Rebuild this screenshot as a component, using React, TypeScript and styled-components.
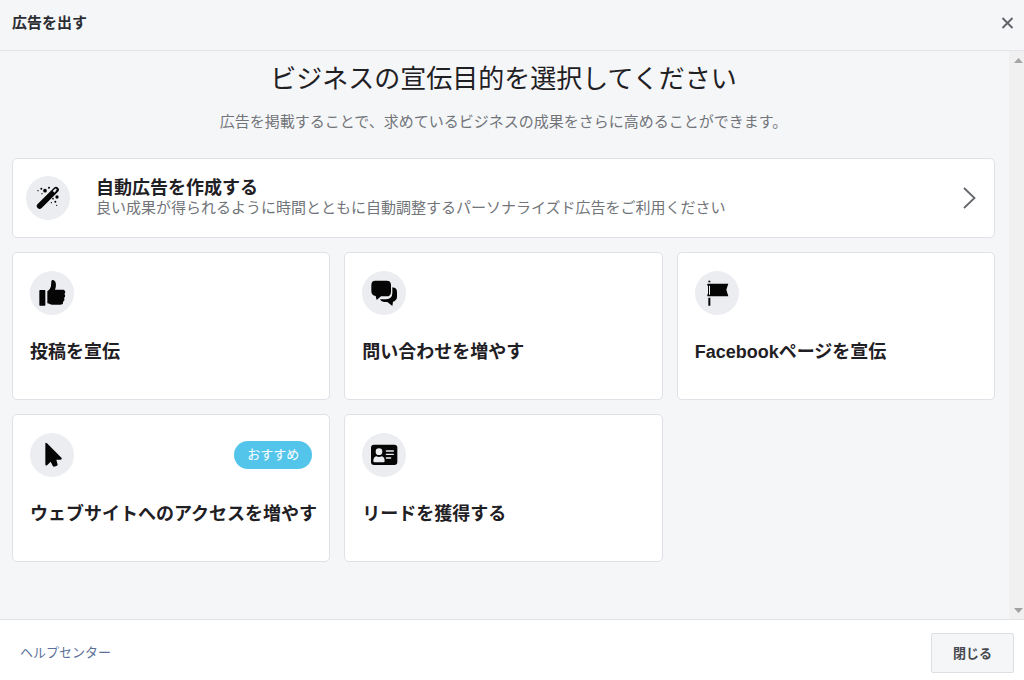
import React from "react";
import styled, { createGlobalStyle } from "styled-components";

const GlobalStyle = createGlobalStyle`
  *, *::before, *::after { box-sizing: border-box; }
  body {
    margin: 0;
    background: #f5f6f8;
    color: #1f2024;
    font-family: "Liberation Sans", "Noto Sans CJK JP", sans-serif;
  }
  button { font-family: inherit; color: inherit; cursor: pointer; }
`;

const Dialog = styled.div`
  display: flex;
  flex-direction: column;
  min-height: 100vh;
`;

const Header = styled.header`
  display: flex;
  align-items: center;
  justify-content: space-between;
  height: 51px;
  padding: 0 10px 4px 12px;
  border-bottom: 1px solid #e3e5e9;
`;

const DialogTitle = styled.h1`
  margin: 0;
  font-size: 15px;
  line-height: 20px;
  font-weight: 700;
  color: #2b2d33;
`;

const CloseIconButton = styled.button`
  display: flex;
  padding: 0;
  border: 0;
  background: none;
  color: #606369;
`;

const Body = styled.div`
  display: flex;
  flex: 1;
`;

const Content = styled.main`
  flex: 1;
  min-width: 0;
  padding: 9px 14px 20px 12px;
`;

const Heading = styled.h2`
  margin: 0;
  font-size: 26px;
  line-height: 38px;
  font-weight: 400;
  text-align: center;
`;

const Lead = styled.p`
  margin: 14px 0 26px;
  font-size: 15px;
  line-height: 20px;
  text-align: center;
  color: #717479;
`;

const Grid = styled.div`
  display: grid;
  grid-template-columns: repeat(3, minmax(0, 1fr));
  gap: 14px;
`;

const Card = styled.button`
  border: 1px solid #dfe1e6;
  border-radius: 5px;
  background: #fff;
  text-align: left;
`;

const WideCard = styled(Card)`
  grid-column: 1 / -1;
  display: flex;
  align-items: center;
  gap: 26px;
  min-height: 80px;
  padding: 0 18px 0 13px;
`;

const WideText = styled.span`
  display: flex;
  flex: 1;
  flex-direction: column;
`;

const GoalCard = styled(Card)`
  display: flex;
  flex-direction: column;
  gap: 27px;
  min-height: 148px;
  padding: 18px 17px;
`;

const CardTop = styled.span`
  display: flex;
  align-items: center;
  justify-content: space-between;
`;

const CardTitle = styled.span`
  font-size: 18px;
  line-height: 20px;
  font-weight: 700;
  white-space: nowrap;
`;

const CardNote = styled.span`
  font-size: 15px;
  line-height: 20px;
  color: #717479;
`;

const IconDisc = styled.svg`
  flex: none;
  width: 44px;
  height: 44px;
  border-radius: 50%;
  background: #ebedf1;
  fill: #050505;
`;

const Badge = styled.span`
  padding: 0 13px;
  border-radius: 14px;
  background: #54c5ea;
  color: #fff;
  font-size: 13px;
  line-height: 28px;
`;

const ScrollTrack = styled.div`
  display: flex;
  flex-direction: column;
  justify-content: space-between;
  align-items: center;
  width: 15px;
  padding: 7px 0 6px 3px;
  background: #f0f0f1;
`;

const Footer = styled.footer`
  display: flex;
  align-items: center;
  justify-content: space-between;
  height: 61px;
  padding: 5px 10px 0 20px;
  border-top: 1px solid #e0e2e5;
  background: #fff;
`;

const HelpLink = styled.a`
  font-size: 13px;
  line-height: 20px;
  color: #5c7199;
  text-decoration: none;
`;

const CloseButton = styled.button`
  width: 83px;
  height: 40px;
  padding: 0;
  border: 1px solid #dcdfe4;
  border-radius: 2px;
  background: #f5f6f8;
  color: #46494f;
  font-size: 13px;
  font-weight: 700;
`;

const WandIcon = () => (
  <IconDisc viewBox="33 35 132 132" aria-hidden="true">
    <path d="M74 125 L123 76" stroke="#050505" strokeWidth="17" strokeLinecap="round" />
    <path d="M113 80 L120 73 Q125 71 125 76 L119 85 Z" fill="#ebedf1" />
    <circle cx="90" cy="79" r="5.5" />
    <circle cx="102" cy="70" r="3" />
    <circle cx="79" cy="73" r="3" />
    <circle cx="69" cy="79" r="2" />
    <circle cx="81" cy="88" r="2" />
    <circle cx="126" cy="98" r="5" />
    <circle cx="114" cy="103" r="2.5" />
    <circle cx="121" cy="112" r="3" />
    <circle cx="109" cy="115" r="2" />
    <circle cx="125" cy="123" r="2" />
  </IconDisc>
);

const LikeIcon = () => (
  <IconDisc viewBox="29 31 132 132" aria-hidden="true">
    <rect x="57" y="88" width="18" height="47" rx="2" />
    <path d="M81 92 C88 87 91 81 92 75 L93 62 C95 56 103 57 106 66 C108 74 106 81 104 87 L127 87 C135 87 137 95 132 100 C136 104 135 109 131 112 C134 117 132 121 128 123 C130 129 126 132 119 132 L96 132 C89 132 87 129 81 128 Z" />
  </IconDisc>
);

const ChatIcon = () => (
  <IconDisc viewBox="36 31 132 132" aria-hidden="true">
    <path d="M127 80 Q141 81 141 94 V108 Q141 119 129 123 L127 136 L112 124 H102 Q93 124 90 116 H108 Q127 114 127 97 Z" />
    <path d="M76 60 H110 Q123 60 123 73 V93 Q123 107 109 107 H93 L80 118 L77 106 Q64 104 64 92 V73 Q64 60 76 60 Z" />
  </IconDisc>
);

const FlagIcon = () => (
  <IconDisc viewBox="30 31 132 132" aria-hidden="true">
    <path d="M70 60 H76 V65 H70 Z M70 111 H76 V135 H70 Z" />
    <path d="M67 69 H130 L124 87 L130 107 H67 V101 H69 V75 H67 Z M72 75 V102 H75 V75 Z" fillRule="evenodd" />
  </IconDisc>
);

const PointerIcon = () => (
  <IconDisc viewBox="29 22 132 132" aria-hidden="true">
    <path d="M75 55 Q75 49 80 53 L124 97 Q126 102 120 102 H108 L112 117 Q112 120 108 121 L101 123 Q98 123 97 120 L91 108 L81 118 Q75 122 75 116 Z" />
  </IconDisc>
);

const ContactIcon = () => (
  <IconDisc viewBox="36 22 132 132" aria-hidden="true">
    <rect x="63" y="57" width="79" height="61" rx="9" />
    <g fill="#ebedf1">
      <circle cx="87" cy="78" r="10" />
      <path d="M70 107 Q70 93 79 92 Q87 96 95 92 Q104 93 104 107 Q104 110 100 110 H74 Q70 110 70 107 Z" />
      <rect x="107" y="74" width="25" height="4" rx="2" />
      <rect x="107" y="84" width="25" height="4" rx="2" />
      <rect x="107" y="95" width="17" height="4" rx="2" />
    </g>
  </IconDisc>
);

interface Goal {
  title: string;
  Icon: React.FC;
  recommended?: boolean;
}

const goals: Goal[] = [
  { title: "投稿を宣伝", Icon: LikeIcon },
  { title: "問い合わせを増やす", Icon: ChatIcon },
  { title: "Facebookページを宣伝", Icon: FlagIcon },
  { title: "ウェブサイトへのアクセスを増やす", Icon: PointerIcon, recommended: true },
  { title: "リードを獲得する", Icon: ContactIcon },
];

export default function App() {
  return (
    <Dialog lang="ja">
      <GlobalStyle />
      <Header>
        <DialogTitle>広告を出す</DialogTitle>
        <CloseIconButton type="button" aria-label="閉じる">
          <svg width="13" height="12" viewBox="0 0 13 12" fill="none" stroke="currentColor" strokeWidth="1.9">
            <path d="M1.5 1 L11.5 11 M11.5 1 L1.5 11" />
          </svg>
        </CloseIconButton>
      </Header>
      <Body>
        <Content>
          <Heading>ビジネスの宣伝目的を選択してください</Heading>
          <Lead>広告を掲載することで、求めているビジネスの成果をさらに高めることができます。</Lead>
          <Grid>
            <WideCard type="button">
              <WandIcon />
              <WideText>
                <CardTitle>自動広告を作成する</CardTitle>
                <CardNote>良い成果が得られるように時間とともに自動調整するパーソナライズド広告をご利用ください</CardNote>
              </WideText>
              <svg width="13" height="22" viewBox="0 0 13 22" fill="none" stroke="#63666b" strokeWidth="1.8" aria-hidden="true">
                <path d="M1 1 L11.5 11 L1 21" />
              </svg>
            </WideCard>
            {goals.map(({ title, Icon, recommended }) => (
              <GoalCard type="button" key={title}>
                <CardTop>
                  <Icon />
                  {recommended && <Badge>おすすめ</Badge>}
                </CardTop>
                <CardTitle>{title}</CardTitle>
              </GoalCard>
            ))}
          </Grid>
        </Content>
        <ScrollTrack aria-hidden="true">
          <svg width="9" height="5" viewBox="0 0 9 5" fill="#a5a6a8"><path d="M0 5 L4.5 0 L9 5 Z" /></svg>
          <svg width="9" height="5" viewBox="0 0 9 5" fill="#a0a1a3"><path d="M0 0 L4.5 5 L9 0 Z" /></svg>
        </ScrollTrack>
      </Body>
      <Footer>
        <HelpLink href="#help">ヘルプセンター</HelpLink>
        <CloseButton type="button">閉じる</CloseButton>
      </Footer>
    </Dialog>
  );
}
